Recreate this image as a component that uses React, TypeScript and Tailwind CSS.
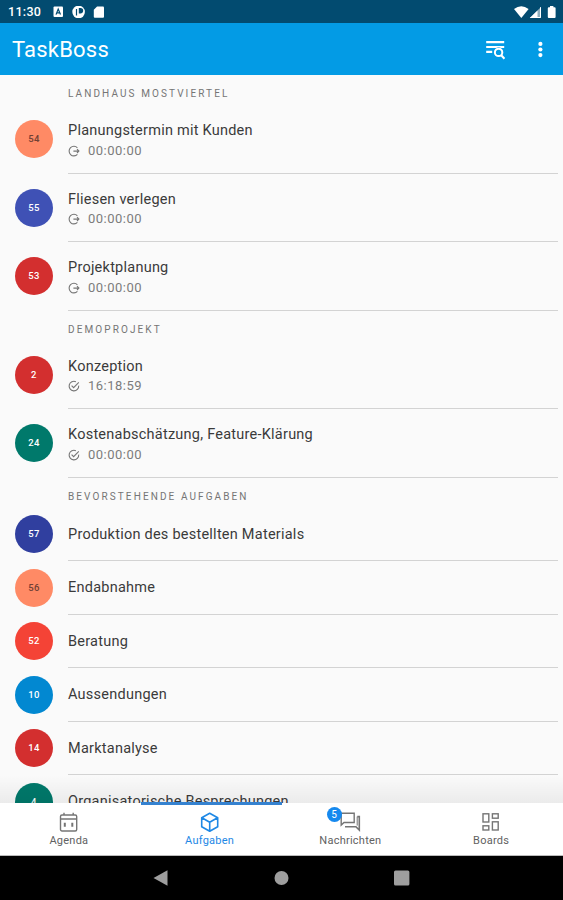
import React from 'react';

type Task = { id: string; title: string; color: string; dark?: boolean; time?: string; done?: boolean };
type Section = { name: string; tasks: Task[] };

const sections: Section[] = [
  {
    name: 'LANDHAUS MOSTVIERTEL',
    tasks: [
      { id: '54', title: 'Planungstermin mit Kunden', color: 'bg-[#ff8a65]', dark: true, time: '00:00:00' },
      { id: '55', title: 'Fliesen verlegen', color: 'bg-[#3f51b5]', time: '00:00:00' },
      { id: '53', title: 'Projektplanung', color: 'bg-[#d32f2f]', time: '00:00:00' },
    ],
  },
  {
    name: 'DEMOPROJEKT',
    tasks: [
      { id: '2', title: 'Konzeption', color: 'bg-[#d32f2f]', time: '16:18:59', done: true },
      { id: '24', title: 'Kostenabschätzung, Feature-Klärung', color: 'bg-[#00796b]', time: '00:00:00', done: true },
    ],
  },
  {
    name: 'BEVORSTEHENDE AUFGABEN',
    tasks: [
      { id: '57', title: 'Produktion des bestellten Materials', color: 'bg-[#303f9f]' },
      { id: '56', title: 'Endabnahme', color: 'bg-[#ff8a65]', dark: true },
      { id: '52', title: 'Beratung', color: 'bg-[#f44336]' },
      { id: '10', title: 'Aussendungen', color: 'bg-[#0288d1]' },
      { id: '14', title: 'Marktanalyse', color: 'bg-[#d32f2f]' },
      { id: '4', title: 'Organisatorische Besprechungen', color: 'bg-[#00796b]' },
    ],
  },
];

function TimeIcon({ done }: { done?: boolean }) {
  return (
    <svg className="mt-[1px] h-3 w-3 shrink-0" viewBox="0 0 12 12" fill="none" stroke="#757575" strokeWidth="1.1">
      {done ? (
        <>
          <path d="M7.9 1.7A4.8 4.8 0 1 0 10.7 5.6" />
          <path d="M3.6 5.6l2 2L10.8 2.3" />
        </>
      ) : (
        <>
          <path d="M9.4 2.8A4.8 4.8 0 1 0 9.4 9.4" />
          <path d="M5.4 6.1h5.4M9 4.2l1.9 1.9L9 8" />
        </>
      )}
    </svg>
  );
}

function Row({ task }: { task: Task }) {
  return (
    <div className={`flex shrink-0 pl-[15px] pr-[5px] ${task.time ? 'h-[68.5px]' : 'h-[53.5px]'}`}>
      <div className="flex w-[53px] items-center">
        <div className={`flex h-[38px] w-[38px] items-center justify-center rounded-full text-[9.5px] font-medium tracking-[0.4px] ${task.color} ${task.dark ? 'text-[#704034]' : 'text-white'}`}>
          {task.id}
        </div>
      </div>
      <div className={`flex flex-1 flex-col justify-center border-b border-[#d3d3d3] ${task.time ? 'pt-[3px]' : 'pt-[2px]'}`}>
        <div className="whitespace-nowrap text-[14.5px] leading-[20px] tracking-[0.24px] text-[#3a3a3a]">{task.title}</div>
        {task.time && (
          <div className="flex h-[18px] items-center gap-2 text-[13px] tracking-[0.5px] text-[#7c7c7c]">
            <TimeIcon done={task.done} />
            <span>{task.time}</span>
          </div>
        )}
      </div>
    </div>
  );
}

function StatusBar() {
  return (
    <div className="flex h-[23px] shrink-0 items-center bg-[#024b70] pl-2 pr-[6px] pt-[1px] text-white">
      <span className="w-[45px] pt-[1px] text-[12.5px] font-medium tracking-[0.3px]">11:30</span>
      <svg className="h-3 w-[53px]" viewBox="0 0 53 12">
        <rect x="0.5" y="0.5" width="9.5" height="10.5" rx="1" fill="#fff" />
        <path d="M3 8.6L5.2 3l2.3 5.6M3.8 6.8h3" fill="none" stroke="#024b70" strokeWidth="1.2" />
        <circle cx="25.6" cy="6" r="6.3" fill="#fff" />
        <path d="M23.5 3v6.5M26.4 2.7v4.2h1.1a2.1 2.1 0 0 0 0-4.2z" fill="#024b70" stroke="#024b70" strokeWidth="1.2" />
        <path d="M44.1 0.4h5.9q1 0 1 1v9.4q0 1-1 1h-8.2q-1 0-1-1V3.7z" fill="#fff" />
      </svg>
      <svg className="ml-auto h-3 w-[43px]" viewBox="0 0 43 12">
        <path d="M0 3.1Q7.3-2.6 14.6 3.1L7.3 12z" fill="#fff" />
        <path d="M27 1V12H15.8z" fill="#8fadbd" />
        <path d="M23.5 4.5V12h-7.7z" fill="#fff" />
        <path d="M26.5 1.2v10.3H16.6" fill="none" stroke="#fff" strokeWidth="1" />
        <path d="M36 1.2V0h3.4v1.2h1.2q1 0 1 1V11q0 1-1 1h-5.8q-1 0-1-1V2.2q0-1 1-1z" fill="#fff" />
      </svg>
    </div>
  );
}

function AppBar() {
  return (
    <div className="flex h-[52px] shrink-0 items-center bg-[#039be5] pl-3 pr-[13px] text-white">
      <h1 className="pt-[2px] text-[22px] font-normal leading-[50px] tracking-[0.2px]">TaskBoss</h1>
      <svg className="ml-auto mt-[1px] h-5 w-5" viewBox="0 0 20 20" fill="none" stroke="#fff">
        <path d="M1.2 2.2h18M1.2 7h18M1.2 11.8h6" strokeWidth="2.2" />
        <circle cx="13.6" cy="12.4" r="5.2" fill="#039be5" stroke="none" />
        <circle cx="13.6" cy="12.4" r="3.7" strokeWidth="2" />
        <path d="M16 15l3.5 3.7" strokeWidth="2.2" />
      </svg>
      <svg className="ml-[25px] mt-[1px] h-5 w-5" viewBox="0 0 20 20" fill="#fff">
        <circle cx="10.4" cy="3.9" r="2.1" />
        <circle cx="10.4" cy="9.5" r="2.1" />
        <circle cx="10.4" cy="15.1" r="2.1" />
      </svg>
    </div>
  );
}

const tabIcons: Record<string, React.ReactNode> = {
  Agenda: (
    <>
      <rect x="1.5" y="3" width="16.2" height="16" rx="1.5" />
      <path d="M1.5 7h16.2M5 .8V3M14.2 .8V3" />
      <path d="M5.8 10.7v4M13.3 10.7v4" strokeWidth="2" />
    </>
  ),
  Aufgaben: (
    <path d="M9.7 1.3l8 4.4v9l-8 4.6-8-4.6v-9zM1.9 5.8l7.8 4.4 7.8-4.4M9.7 10.2v9" strokeWidth="1.6" strokeLinejoin="round" />
  ),
  Nachrichten: (
    <>
      <path d="M1.2 1.2h13v9.3H4l-2.8 2.6z" />
      <path d="M17.3 4.6h2v13.5l-3.4-3.4H5" strokeWidth="1.6" />
      <path d="M17.2 4.6v9" strokeWidth="1" />
    </>
  ),
  Boards: (
    <>
      <rect x="2" y="1.8" width="5.8" height="8.2" />
      <rect x="11.4" y="1.8" width="5.8" height="4.4" />
      <rect x="2" y="13.8" width="5.8" height="4.2" />
      <rect x="11.4" y="9.8" width="5.8" height="8.2" />
    </>
  ),
};

function Tab({ name, active, badge }: { name: string; active?: boolean; badge?: string }) {
  return (
    <div className={`relative flex flex-1 flex-col items-center pr-[3px] pt-[9px] ${active ? 'text-[#1e88e5]' : 'text-[#616161]'}`}>
      {active && <div className="absolute -top-[1px] left-0 h-[3px] w-full bg-[#3582d0]" />}
      <svg className="h-5 w-5 shrink-0 overflow-visible" viewBox="0 0 20 20" fill="none" stroke={active ? '#1e88e5' : '#757575'} strokeWidth="1.4">
        {tabIcons[name]}
      </svg>
      {badge && (
        <div className="absolute left-[45px] top-[4px] flex h-[15px] w-[15px] items-center justify-center rounded-full bg-[#1689ee] text-[10px] text-white">
          {badge}
        </div>
      )}
      <span className="mt-[2px] text-[11px] leading-[14px] tracking-[0.25px]">{name}</span>
    </div>
  );
}

export default function App() {
  return (
    <div className="flex h-[900px] w-[563px] flex-col overflow-hidden bg-[#fafafa] font-['Roboto',sans-serif]">
      <StatusBar />
      <AppBar />
      <main className="relative flex min-h-0 flex-1 flex-col overflow-hidden">
        {sections.map((s) => (
          <React.Fragment key={s.name}>
            <h2 className="h-[30px] shrink-0 pl-[68px] pt-[12px] text-[10px] font-normal leading-[13px] tracking-[2.1px] text-[#757575]">{s.name}</h2>
            {s.tasks.map((t) => (
              <Row key={t.id} task={t} />
            ))}
          </React.Fragment>
        ))}
        <div className="absolute inset-x-0 bottom-0 h-7 bg-linear-to-t from-black/6 to-transparent" />
      </main>
      <nav className="relative flex h-[53px] shrink-0 border-b border-[#bbb] bg-white">
        <Tab name="Agenda" />
        <Tab name="Aufgaben" active />
        <Tab name="Nachrichten" badge="5" />
        <Tab name="Boards" />
      </nav>
      <div className="flex h-11 shrink-0 items-center justify-center bg-black">
        <svg className="h-4 w-[257px]" viewBox="0 0 257 16" fill="#9e9e9e">
          <path d="M0.5 8L14.5 0.3v15.4z" />
          <circle cx="128.5" cy="8" r="7" />
          <rect x="241" y="0.5" width="15.4" height="15" rx="1.5" />
        </svg>
      </div>
    </div>
  );
}
